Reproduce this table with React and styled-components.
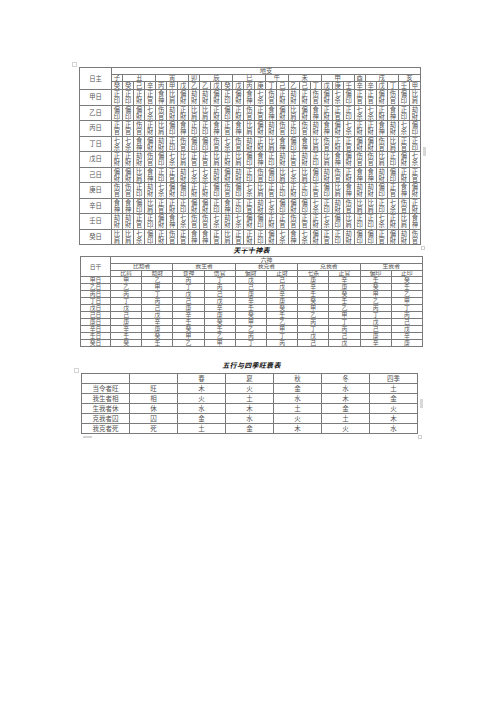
import React from "react";
import styled, { createGlobalStyle } from "styled-components";

const STEMS = "甲乙丙丁戊己庚辛壬癸".split("");
const GODS = [
  ["比肩", "劫財"],
  ["食神", "伤官"],
  ["偏財", "正財"],
  ["七杀", "正官"],
  ["偏印", "正印"],
];
const GROUPS = ["比劫者", "我生者", "我克者", "克我者", "生我者"];

// hidden stems of each branch
const BRANCHES = [
  ["子", "癸"],
  ["丑", "癸己辛"],
  ["寅", "丙甲戊"],
  ["卯", "乙"],
  ["辰", "乙戊癸"],
  ["巳", "戊丙庚"],
  ["午", "丁己"],
  ["未", "乙己丁"],
  ["申", "戊庚壬"],
  ["酉", "辛"],
  ["戌", "辛戊丁"],
  ["亥", "壬甲"],
];

const SEASONS = ["春", "夏", "秋", "冬", "四季"];
const STATES = [
  ["当令者旺", "旺", ["木", "火", "金", "水", "土"]],
  ["我生者相", "相", ["火", "土", "水", "木", "金"]],
  ["生我者休", "休", ["水", "木", "土", "金", "火"]],
  ["克我者囚", "囚", ["金", "水", "火", "土", "木"]],
  ["我克者死", "死", ["土", "金", "木", "火", "水"]],
];

function godOf(day, other) {
  const d = (Math.floor(other / 2) - Math.floor(day / 2) + 5) % 5;
  return GODS[d][day % 2 === other % 2 ? 0 : 1];
}

function stemFor(day, g, k) {
  return STEMS.find((_, s) => godOf(day, s) === GODS[g][k]);
}

const GlobalStyle = createGlobalStyle`
  body {
    margin: 0;
    background: #ffffff;
    font-family: "Liberation Sans", "Noto Sans CJK SC", sans-serif;
    color: #555555;
  }
`;

const Page = styled.div`
  width: 500px;
  height: 707px;
  padding-top: 67px;
  box-sizing: border-box;
  display: flex;
  flex-direction: column;
`;

const Wrap = styled.div`
  position: relative;
  margin-left: ${(p) => p.left}px;
  width: ${(p) => p.width}px;
`;

const Table = styled.table`
  width: 100%;
  border-collapse: collapse;
  table-layout: fixed;
  font-size: ${(p) => p.size}px;

  td {
    border: 1px solid #7a7a7a;
    padding: 0;
    text-align: center;
    vertical-align: middle;
    overflow: hidden;
    white-space: nowrap;
  }
`;

// fixed-height cell content so fallback CJK metrics can't stretch a row
const Fit = styled.div`
  height: ${(p) => p.h}px;
  line-height: ${(p) => p.h}px;
  overflow: hidden;
`;

const Pair = styled.span`
  display: inline-block;
  vertical-align: middle;
  writing-mode: vertical-rl;
  text-orientation: upright;
  font-size: 6.3px;
  line-height: 9px;
  letter-spacing: 1.2px;
  color: #505050;
`;

const Title = styled.div`
  margin-left: 80px;
  width: 343px;
  height: ${(p) => p.h}px;
  margin-top: ${(p) => p.top || 0}px;
  line-height: ${(p) => p.h}px;
  text-align: center;
  font-size: 7px;
  font-weight: 700;
  font-style: italic;
  color: #111;
  letter-spacing: 0.3px;
`;

const MoveHandle = styled.span`
  position: absolute;
  left: -7px;
  top: -5px;
  width: 5px;
  height: 5px;
  border: 1px solid #d4d4d4;
  box-sizing: border-box;
`;

const SideGrip = styled.span`
  position: absolute;
  right: -5px;
  top: ${(p) => p.top}px;
  width: 3px;
  height: 9px;
  background: #d8d8d8;
`;

const BottomGrip = styled.span`
  position: absolute;
  left: ${(p) => p.left}px;
  bottom: -4px;
  width: ${(p) => p.w}px;
  height: 2px;
  background: #d4d4d4;
`;

const CornerGrip = styled.span`
  position: absolute;
  right: -4px;
  bottom: -5px;
  width: 4px;
  height: 4px;
  border: 1px solid #cfcfcf;
  box-sizing: border-box;
`;

function C({ h, span, children }) {
  return (
    <td colSpan={span}>
      <Fit h={h}>{children}</Fit>
    </td>
  );
}

function GodTable() {
  const cols = BRANCHES.reduce((n, b) => n + b[1].length, 0);
  return (
    <Wrap left={79} width={342}>
      <MoveHandle />
      <Table size={6.3}>
        <colgroup>
          <col style={{ width: 32 }} />
          {Array.from({ length: cols }, (_, i) => (
            <col key={i} />
          ))}
        </colgroup>
        <tbody>
          <tr>
            <td rowSpan={3}>日主</td>
            <C h={6} span={cols}>地支</C>
          </tr>
          <tr>
            {BRANCHES.map(([b, h]) => (
              <C h={6} key={b} span={h.length}>
                {b}
              </C>
            ))}
          </tr>
          <tr>
            {BRANCHES.map(([b, h]) =>
              h.split("").map((s, i) => (
                <C h={7} key={b + i}>
                  {s}
                </C>
              ))
            )}
          </tr>
          {STEMS.map((d, di) => (
            <tr key={d}>
              <C h={14.5}>{d}日</C>
              {BRANCHES.map(([b, h]) =>
                h.split("").map((s, i) => (
                  <C h={14.5} key={b + i}>
                    <Pair>{godOf(di, STEMS.indexOf(s))}</Pair>
                  </C>
                ))
              )}
            </tr>
          ))}
        </tbody>
      </Table>
      <SideGrip top={80} />
      <BottomGrip left={163} w={10} />
      <CornerGrip />
    </Wrap>
  );
}

function StemTable() {
  return (
    <Wrap left={80} width={343}>
      <Table size={5.8}>
        <colgroup>
          <col style={{ width: 30 }} />
          {Array.from({ length: 10 }, (_, i) => (
            <col key={i} />
          ))}
        </colgroup>
        <tbody>
          <tr>
            <td rowSpan={3}>日干</td>
            <C h={6} span={10}>六神</C>
          </tr>
          <tr>
            {GROUPS.map((g) => (
              <C h={5.5} key={g} span={2}>
                {g}
              </C>
            ))}
          </tr>
          <tr>
            {GODS.map((pair) =>
              pair.map((n) => (
                <C h={5.5} key={n}>
                  {n}
                </C>
              ))
            )}
          </tr>
          {STEMS.map((d, di) => (
            <tr key={d}>
              <C h={6}>{d}日</C>
              {GODS.map((pair, g) =>
                pair.map((n, k) => (
                  <C h={6} key={n}>
                    {stemFor(di, g, k)}
                  </C>
                ))
              )}
            </tr>
          ))}
        </tbody>
      </Table>
    </Wrap>
  );
}

function SeasonTable() {
  return (
    <Wrap left={81} width={337}>
      <MoveHandle />
      <Table size={6.5}>
        <tbody>
          <tr>
            <C h={9} />
            <C h={9} />
            {SEASONS.map((s) => (
              <C h={9} key={s}>
                {s}
              </C>
            ))}
          </tr>
          {STATES.map(([label, st, els]) => (
            <tr key={label}>
              <C h={9}>{label}</C>
              <C h={9}>{st}</C>
              {els.map((e, i) => (
                <C h={9} key={i}>
                  {e}
                </C>
              ))}
            </tr>
          ))}
        </tbody>
      </Table>
      <SideGrip top={26} />
      <BottomGrip left={2} w={9} />
      <CornerGrip />
    </Wrap>
  );
}

export default function App() {
  return (
    <>
      <GlobalStyle />
      <Page>
        <GodTable />
        <Title h={11}>天干十神表</Title>
        <StemTable />
        <Title h={14} top={12}>
          五行与四季旺衰表
        </Title>
        <SeasonTable />
      </Page>
    </>
  );
}
